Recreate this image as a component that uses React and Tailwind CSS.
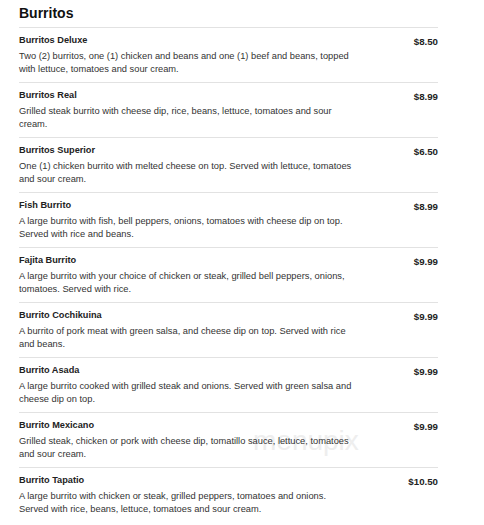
const items = [
  {
    name: "Burritos Deluxe",
    price: "$8.50",
    desc: "Two (2) burritos, one (1) chicken and beans and one (1) beef and beans, topped with lettuce, tomatoes and sour cream.",
  },
  {
    name: "Burritos Real",
    price: "$8.99",
    desc: "Grilled steak burrito with cheese dip, rice, beans, lettuce, tomatoes and sour cream.",
  },
  {
    name: "Burritos Superior",
    price: "$6.50",
    desc: "One (1) chicken burrito with melted cheese on top. Served with lettuce, tomatoes and sour cream.",
  },
  {
    name: "Fish Burrito",
    price: "$8.99",
    desc: "A large burrito with fish, bell peppers, onions, tomatoes with cheese dip on top. Served with rice and beans.",
  },
  {
    name: "Fajita Burrito",
    price: "$9.99",
    desc: "A large burrito with your choice of chicken or steak, grilled bell peppers, onions, tomatoes. Served with rice.",
  },
  {
    name: "Burrito Cochikuina",
    price: "$9.99",
    desc: "A burrito of pork meat with green salsa, and cheese dip on top. Served with rice and beans.",
  },
  {
    name: "Burrito Asada",
    price: "$9.99",
    desc: "A large burrito cooked with grilled steak and onions. Served with green salsa and cheese dip on top.",
  },
  {
    name: "Burrito Mexicano",
    price: "$9.99",
    desc: "Grilled steak, chicken or pork with cheese dip, tomatillo sauce, lettuce, tomatoes and sour cream.",
  },
  {
    name: "Burrito Tapatio",
    price: "$10.50",
    desc: "A large burrito with chicken or steak, grilled peppers, tomatoes and onions. Served with rice, beans, lettuce, tomatoes and sour cream.",
  },
];

function MenuItem({ item }) {
  return (
    <div className="flex justify-between border-t border-[#e2e2e2] pt-[6px] pb-[7px]">
      <div className="w-[337px]">
        <div className="text-[9.2px] leading-[13px] font-bold text-[#222]">{item.name}</div>
        <p className="mt-[3px] text-[9.3px] leading-[12.5px] text-[#333]">{item.desc}</p>
      </div>
      <div className="pt-[1px] text-[9.7px] leading-[13px] font-bold text-[#222]">{item.price}</div>
    </div>
  );
}

export default function App() {
  return (
    <div
      className="relative min-h-[525px] bg-white"
      style={{ fontFamily: '"Liberation Sans", Arial, sans-serif' }}
    >
      {/* watermark */}
      <div className="pointer-events-none absolute left-[253px] top-[427px] text-[28px] leading-none font-light text-[#eeeeee]">
        menupix
      </div>

      <div className="relative ml-[19px] w-[419px]">
        <h1 className="pt-[4px] pb-[5px] text-[14px] leading-[18px] font-bold text-[#111]">Burritos</h1>
        {items.map((item) => (
          <MenuItem key={item.name} item={item} />
        ))}
      </div>
    </div>
  );
}
